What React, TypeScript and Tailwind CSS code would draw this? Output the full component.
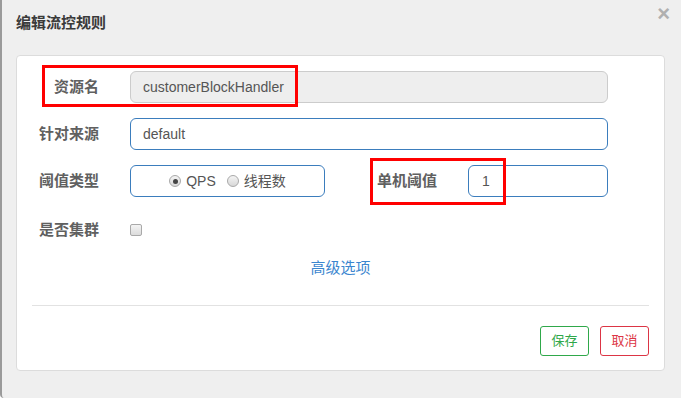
import React from "react";

const font = { fontFamily: '"Liberation Sans", "Noto Sans CJK SC", sans-serif' };

function Radio({ checked }: { checked?: boolean }) {
  return (
    <span className="flex h-[12px] w-[12px] items-center justify-center rounded-full border border-[#a9a9a9] bg-gradient-to-b from-[#f4f4f4] to-[#d8d8d8]">
      {checked && <span className="h-[5px] w-[5px] rounded-full bg-[#444]" />}
    </span>
  );
}

export default function App() {
  return (
    <div
      style={font}
      className="relative h-[398px] w-[681px] overflow-hidden rounded-bl-[4px] border-l-2 border-[#9a9a9a] bg-[#efefef] pl-[14px]"
    >
      {/* header */}
      <div className="pt-[14px] text-[15px] font-bold leading-[18px] text-[#3a3a3a]">编辑流控规则</div>
      <span className="absolute right-[11px] top-[3px] text-[22px] font-bold leading-[22px] text-[#b0b0b0]">×</span>

      {/* body panel */}
      <div className="relative mt-[23px] h-[316px] w-[649px] rounded-[4px] border border-[#dcdcdc] bg-white pt-[15px] text-[14px]">
        <div className="flex flex-col gap-[15px]">
          <div className="flex h-[32px] items-center">
            <label className="w-[82px] text-right text-[15px] font-bold text-[#606060]">资源名</label>
            <div className="ml-[31px] flex h-[32px] w-[478px] items-center rounded-[6px] border border-[#ccc] bg-[#eee] px-[12px] text-[#555]">
              customerBlockHandler
            </div>
          </div>
          <div className="flex h-[32px] items-center">
            <label className="w-[82px] text-right text-[15px] font-bold text-[#606060]">针对来源</label>
            <div className="ml-[31px] flex h-[32px] w-[478px] items-center rounded-[6px] border border-[#3b7dbd] px-[12px] text-[#555]">
              default
            </div>
          </div>
          <div className="flex h-[32px] items-center">
            <label className="w-[82px] text-right text-[15px] font-bold text-[#606060]">阈值类型</label>
            <div className="ml-[31px] flex h-[32px] w-[195px] items-center justify-center rounded-[6px] border border-[#3b7dbd] text-[#555]">
              <Radio checked />
              <span className="ml-[5px]">QPS</span>
              <span className="ml-[11px]"><Radio /></span>
              <span className="ml-[5px]">线程数</span>
            </div>
            <label className="ml-[52px] w-[91px] text-[15px] font-bold text-[#606060]">单机阈值</label>
            <div className="flex h-[32px] w-[140px] items-center rounded-[6px] border border-[#3b7dbd] px-[13px] text-[#555]">
              1
            </div>
          </div>
        </div>

        <div className="mt-[17px] flex h-[32px] items-center">
          <label className="w-[82px] text-right text-[15px] font-bold text-[#606060]">是否集群</label>
          <span className="ml-[31px] h-[12px] w-[12px] rounded-[2px] border border-[#a9a9a9] bg-gradient-to-b from-[#f4f4f4] to-[#dcdcdc]" />
        </div>

        <div className="mt-[12px] text-center text-[15px] leading-[20px] text-[#3b86cf]">高级选项</div>

        <div className="mx-[15px] mt-[27px] h-px bg-[#e2e2e2]" />

        <div className="mt-[20px] flex justify-end gap-[11px] pr-[15px] text-[13px]">
          <button className="h-[30px] w-[49px] rounded-[3px] border border-[#2fa84a] text-[#2fa84a]">保存</button>
          <button className="h-[30px] w-[49px] rounded-[3px] border border-[#dc3545] text-[#dc3545]">取消</button>
        </div>

        {/* annotation boxes */}
        <div className="absolute left-[25px] top-[9px] h-[42px] w-[256px] border-[3px] border-[#ff0000]" />
        <div className="absolute left-[353px] top-[102px] h-[47px] w-[136px] border-[3px] border-[#ff0000]" />
      </div>
    </div>
  );
}
